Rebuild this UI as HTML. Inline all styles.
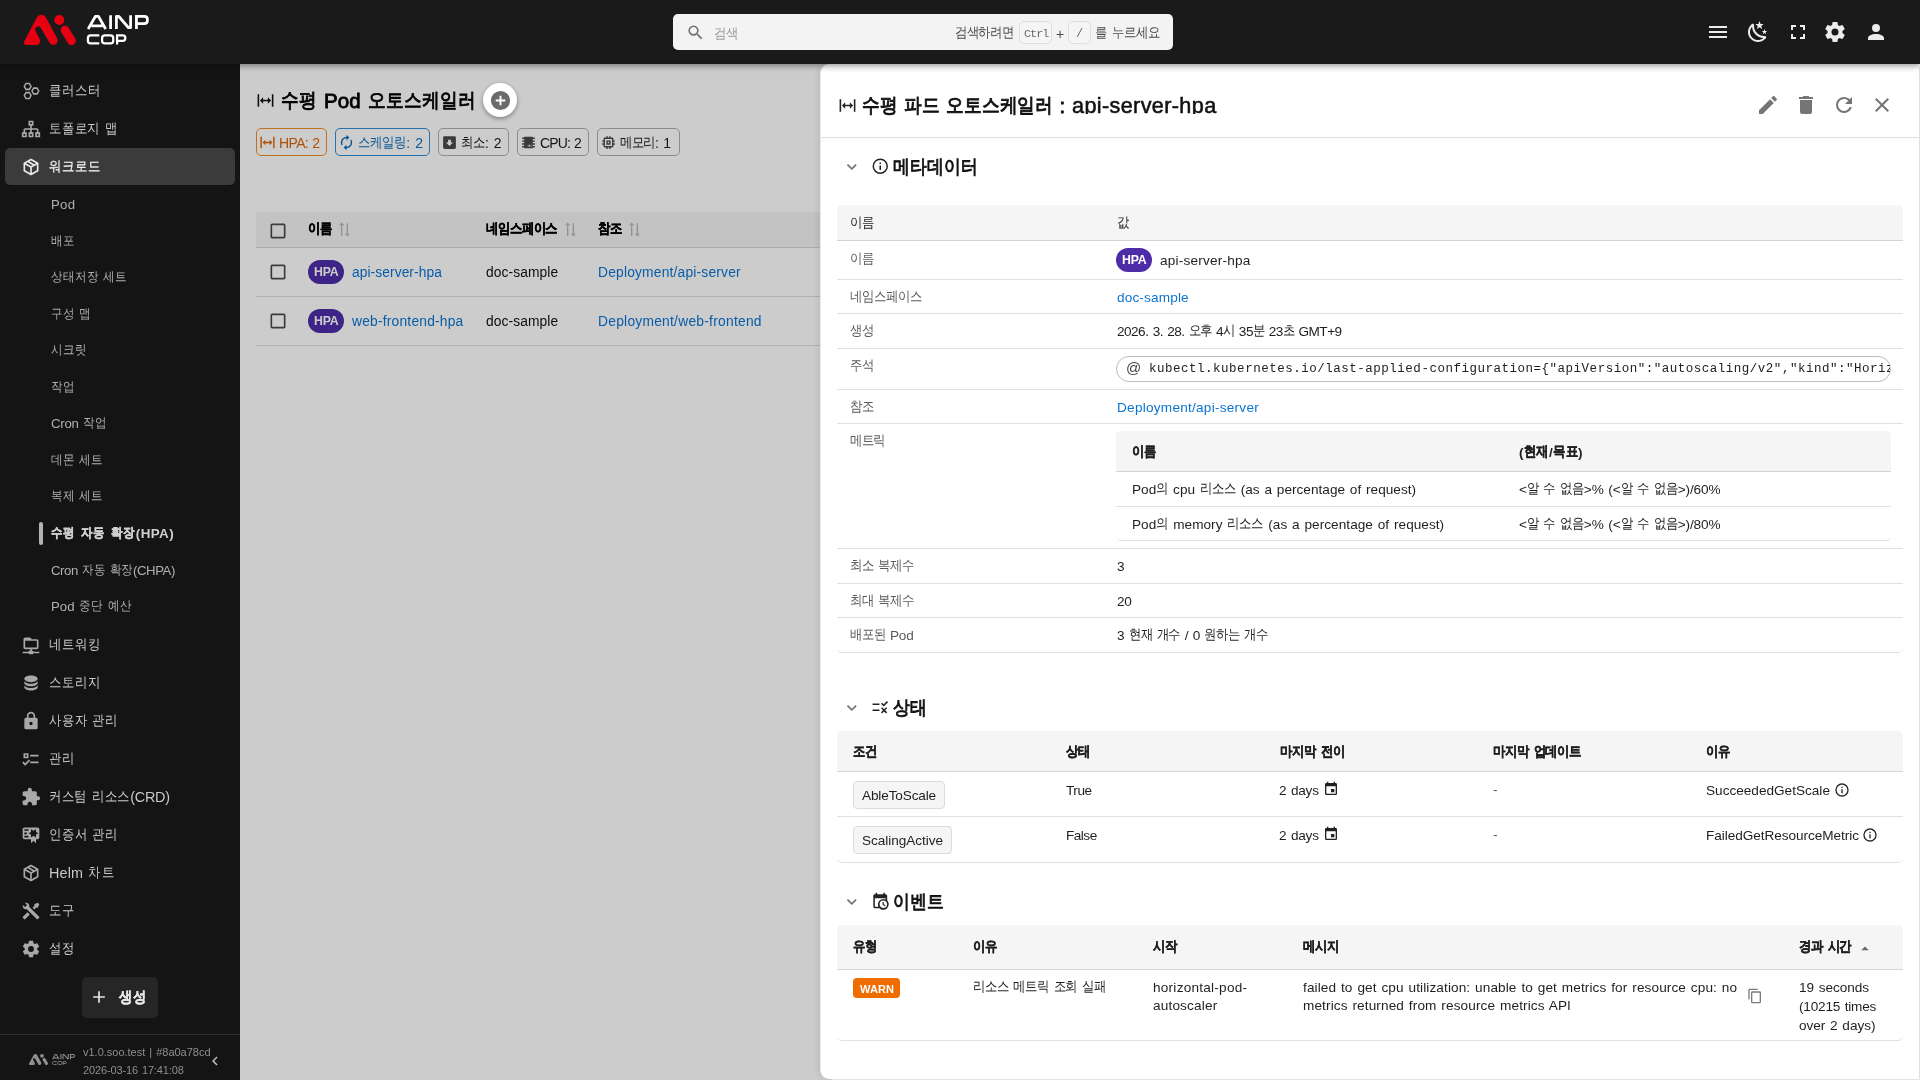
<!DOCTYPE html>
<html lang="ko"><head><meta charset="utf-8"><title>AINP COP</title><style>
*{box-sizing:border-box;margin:0;padding:0}
html,body{width:1920px;height:1080px;overflow:hidden;background:#fff;font-family:"Liberation Sans",sans-serif;}
body{position:relative}
.abs{position:absolute}
.mono{font-family:"Liberation Mono",monospace}
.z{letter-spacing:0}.t{position:absolute;white-space:nowrap;word-spacing:1px;will-change:transform}.k{font-size:.88em;display:inline-block;transform:translateY(-.105em) scaleY(1.13)}.t[style*="font-weight:700"] .k{-webkit-text-stroke:.3px}</style></head><body><div class="abs" style="left:0;top:0;width:1920px;height:1080px"><svg style="position:absolute;left:256px;top:91px;" width="19" height="19" viewBox="0 0 24 24"><path fill="#111" d="M9,11H15V8L19,12L15,16V13H9V16L5,12L9,8V11M2,20V4H4V20H2M20,20V4H22V20H20Z"/></svg><div class="t" style="left:281px;top:87.0px;color:#000;font-size:20.5px;font-weight:400;line-height:28px;-webkit-text-stroke:.8px #000;letter-spacing:0.09px;"><span class="k">수평</span> Pod <span class="k">오토스케일러</span></div><div style="position:absolute;left:256px;top:128px;width:71px;height:28px;border:1px solid #f28c28;border-radius:5px;background:transparent"></div><svg style="position:absolute;left:259px;top:133.5px;" width="17" height="17" viewBox="0 0 24 24"><path fill="#d9650a" d="M9,11H15V8L19,12L15,16V13H9V16L5,12L9,8V11M2,20V4H4V20H2M20,20V4H22V20H20Z"/></svg><div class="t" style="left:278.5px;top:133.0px;color:#d9650a;font-size:14px;font-weight:400;line-height:20px;letter-spacing:-0.64px;">HPA: 2</div><div style="position:absolute;left:335px;top:128px;width:95px;height:28px;border:1px solid #2f8fd8;border-radius:5px;background:transparent"></div><svg style="position:absolute;left:338px;top:133.5px;" width="17" height="17" viewBox="0 0 24 24"><path fill="#0b6fbd" d="M12,6V9L16,5L12,1V4A8,8 0 0,0 4,12C4,13.57 4.46,15.03 5.24,16.26L6.7,14.8C6.25,13.97 6,13 6,12A6,6 0 0,1 12,6M18.76,7.74L17.3,9.2C17.74,10.04 18,11 18,12A6,6 0 0,1 12,18V15L8,19L12,23V20A8,8 0 0,0 20,12C20,10.43 19.54,8.97 18.76,7.74Z"/></svg><div class="t" style="left:357.5px;top:133.0px;color:#0b6fbd;font-size:14px;font-weight:400;line-height:20px;letter-spacing:0.06px;"><span class="k">스케일링</span>: 2</div><div style="position:absolute;left:438px;top:128px;width:70.5px;height:28px;border:1px solid #b0b0b0;border-radius:5px;background:rgba(255,255,255,.08)"></div><svg style="position:absolute;left:441px;top:133.5px;" width="17" height="17" viewBox="0 0 24 24"><path fill="#4a4a4a" d="M5,3H19A2,2 0 0,1 21,5V19A2,2 0 0,1 19,21H5A2,2 0 0,1 3,19V5A2,2 0 0,1 5,3M12,17L17,12H14V8H10V12H7L12,17Z"/></svg><div class="t" style="left:460.5px;top:133.0px;color:#1c1c1c;font-size:14px;font-weight:400;line-height:20px;letter-spacing:-0.02px;"><span class="k">최소</span>: 2</div><div style="position:absolute;left:517px;top:128px;width:72px;height:28px;border:1px solid #b0b0b0;border-radius:5px;background:rgba(255,255,255,.08)"></div><svg style="position:absolute;left:520px;top:133.5px;" width="17" height="17" viewBox="0 0 24 24"><path fill="#4a4a4a" d="M6,4H18V5H21V7H18V9H21V11H18V13H21V15H18V17H21V19H18V20H6V19H3V17H6V15H3V13H6V11H3V9H6V7H3V5H6V4M11,15V18H12V15H11M13,15V18H14V15H13M15,15V18H16V15H15Z"/></svg><div class="t" style="left:540px;top:133.0px;color:#1c1c1c;font-size:14px;font-weight:400;line-height:20px;letter-spacing:-0.85px;">CPU: 2</div><div style="position:absolute;left:597px;top:128px;width:83px;height:28px;border:1px solid #b0b0b0;border-radius:5px;background:rgba(255,255,255,.08)"></div><svg style="position:absolute;left:600px;top:133.5px;" width="17" height="17" viewBox="0 0 24 24"><path fill="#4a4a4a" d="M17,17H7V7H17M21,11V9H19V7C19,5.89 18.1,5 17,5H15V3H13V5H11V3H9V5H7C5.89,5 5,5.89 5,7V9H3V11H5V13H3V15H5V17A2,2 0 0,0 7,19H9V21H11V19H13V21H15V19H17A2,2 0 0,0 19,17V15H21V13H19V11M13,13H11V11H13M15,9H9V15H15V9Z"/></svg><div class="t" style="left:620px;top:133.0px;color:#1c1c1c;font-size:14px;font-weight:400;line-height:20px;letter-spacing:-0.31px;"><span class="k">메모리</span>: 1</div><div style="position:absolute;left:256px;top:212px;width:1648px;height:36px;background:#f4f4f4;border-radius:4px 4px 0 0;border-bottom:1px solid #d6d6d6"></div><div style="position:absolute;left:256px;top:296px;width:1648px;height:1px;background:#dcdcdc"></div><div style="position:absolute;left:256px;top:345px;width:1648px;height:1px;background:#dcdcdc"></div><svg style="position:absolute;left:268px;top:221px;" width="20" height="20" viewBox="0 0 24 24"><path fill="#4a4a4a" d="M19 5v14H5V5h14m0-2H5c-1.1 0-2 .9-2 2v14c0 1.1.9 2 2 2h14c1.1 0 2-.9 2-2V5c0-1.1-.9-2-2-2z"/></svg><svg style="position:absolute;left:268px;top:262px;" width="20" height="20" viewBox="0 0 24 24"><path fill="#4a4a4a" d="M19 5v14H5V5h14m0-2H5c-1.1 0-2 .9-2 2v14c0 1.1.9 2 2 2h14c1.1 0 2-.9 2-2V5c0-1.1-.9-2-2-2z"/></svg><svg style="position:absolute;left:268px;top:311px;" width="20" height="20" viewBox="0 0 24 24"><path fill="#4a4a4a" d="M19 5v14H5V5h14m0-2H5c-1.1 0-2 .9-2 2v14c0 1.1.9 2 2 2h14c1.1 0 2-.9 2-2V5c0-1.1-.9-2-2-2z"/></svg><div class="t" style="left:308px;top:219.2px;color:#000;font-size:14px;font-weight:700;line-height:20px;letter-spacing:0.00px;"><span class="z">&#8203;</span><span class="k">이름</span></div><svg style="position:absolute;left:336px;top:221.0px" width="17" height="17" viewBox="0 0 24 24"><path fill="#b9b9b9" transform="rotate(-90 12 12)" d="M18 12l4-4-4-4v3H3v2h15zM6 12l-4 4 4 4v-3h15v-2H6z"/></svg><div class="t" style="left:486px;top:219.2px;color:#000;font-size:14px;font-weight:700;line-height:20px;letter-spacing:-0.12px;"><span class="z">&#8203;</span><span class="k">네임스페이스</span></div><svg style="position:absolute;left:562px;top:221.0px" width="17" height="17" viewBox="0 0 24 24"><path fill="#b9b9b9" transform="rotate(-90 12 12)" d="M18 12l4-4-4-4v3H3v2h15zM6 12l-4 4 4 4v-3h15v-2H6z"/></svg><div class="t" style="left:598px;top:219.2px;color:#000;font-size:14px;font-weight:700;line-height:20px;letter-spacing:0.25px;"><span class="z">&#8203;</span><span class="k">참조</span></div><svg style="position:absolute;left:626px;top:221.0px" width="17" height="17" viewBox="0 0 24 24"><path fill="#b9b9b9" transform="rotate(-90 12 12)" d="M18 12l4-4-4-4v3H3v2h15zM6 12l-4 4 4 4v-3h15v-2H6z"/></svg><div style="position:absolute;left:308px;top:260px;width:36px;height:24px;border-radius:12px;background:#4e2da8"></div><div class="t" style="left:314.4px;top:262.4px;color:#fff;font-size:12.3px;font-weight:700;line-height:20px;word-spacing:0;letter-spacing:-0.25px;">HPA</div><div class="t" style="left:352px;top:263.0px;color:#0b74d1;font-size:13.8px;font-weight:400;line-height:20px;letter-spacing:0.07px;">api-server-hpa</div><div class="t" style="left:486px;top:263.0px;color:#111;font-size:13.8px;font-weight:400;line-height:20px;letter-spacing:0.09px;">doc-sample</div><div class="t" style="left:598px;top:263.0px;color:#0b74d1;font-size:13.8px;font-weight:400;line-height:20px;letter-spacing:0.19px;">Deployment/api-server</div><div style="position:absolute;left:308px;top:309px;width:36px;height:24px;border-radius:12px;background:#4e2da8"></div><div class="t" style="left:314.4px;top:311.4px;color:#fff;font-size:12.3px;font-weight:700;line-height:20px;word-spacing:0;letter-spacing:-0.25px;">HPA</div><div class="t" style="left:352px;top:312.0px;color:#0b74d1;font-size:13.8px;font-weight:400;line-height:20px;letter-spacing:0.21px;">web-frontend-hpa</div><div class="t" style="left:486px;top:312.0px;color:#111;font-size:13.8px;font-weight:400;line-height:20px;letter-spacing:0.09px;">doc-sample</div><div class="t" style="left:598px;top:312.0px;color:#0b74d1;font-size:13.8px;font-weight:400;line-height:20px;letter-spacing:0.25px;">Deployment/web-frontend</div></div><div class="abs" style="left:240px;top:64px;width:1680px;height:1016px;background:rgba(0,0,0,.2)"></div><div style="position:absolute;left:483px;top:83px;width:34px;height:34px;border-radius:50%;background:#fff;box-shadow:0 2px 4px rgba(0,0,0,.28),0 1px 6px rgba(0,0,0,.14)"></div><svg style="position:absolute;left:488.5px;top:88.5px;" width="23" height="23" viewBox="0 0 24 24"><path fill="#6b6b6b" d="M17,13H13V17H11V13H7V11H11V7H13V11H17M12,2A10,10 0 0,0 2,12A10,10 0 0,0 12,22A10,10 0 0,0 22,12A10,10 0 0,0 12,2Z"/></svg><div class="abs" style="left:820px;top:64px;width:1100px;height:1015px;background:#fff;border-left:1px solid #e9e9e9;border-radius:9px 0 0 9px;box-shadow:-2px 0 8px rgba(0,0,0,.09)"></div><svg style="position:absolute;left:838px;top:96px;" width="19" height="19" viewBox="0 0 24 24"><path fill="#222" d="M9,11H15V8L19,12L15,16V13H9V16L5,12L9,8V11M2,20V4H4V20H2M20,20V4H22V20H20Z"/></svg><div class="t" style="left:862px;top:92.0px;color:#111;font-size:20.4px;font-weight:400;line-height:28px;-webkit-text-stroke:.85px #111;letter-spacing:-0.19px;"><span class="k">수평</span> <span class="k">파드</span> <span class="k">오토스케일러</span> :</div><div class="abs" style="left:1060px;top:84px;width:300px;height:29.8px;overflow:hidden"><div class="t" style="left:11.5px;top:8.0px;color:#111;font-size:21.6px;font-weight:400;line-height:28px;-webkit-text-stroke:.55px #111;letter-spacing:0.38px;">api-server-hpa</div></div><svg style="position:absolute;left:1756px;top:93px;" width="24" height="24" viewBox="0 0 24 24"><path fill="#757575" d="M20.71,7.04C21.1,6.65 21.1,6 20.71,5.63L18.37,3.29C18,2.9 17.35,2.9 16.96,3.29L15.12,5.12L18.87,8.87M3,17.25V21H6.75L17.81,9.93L14.06,6.18L3,17.25Z"/></svg><svg style="position:absolute;left:1794px;top:93px;" width="24" height="24" viewBox="0 0 24 24"><path fill="#757575" d="M19,4H15.5L14.5,3H9.5L8.5,4H5V6H19M6,19A2,2 0 0,0 8,21H16A2,2 0 0,0 18,19V7H6V19Z"/></svg><svg style="position:absolute;left:1832px;top:93px;" width="24" height="24" viewBox="0 0 24 24"><path fill="#757575" d="M17.65,6.35C16.2,4.9 14.21,4 12,4A8,8 0 0,0 4,12A8,8 0 0,0 12,20C15.73,20 18.84,17.45 19.73,14H17.65C16.83,16.33 14.61,18 12,18A6,6 0 0,1 6,12A6,6 0 0,1 12,6C13.66,6 15.14,6.69 16.22,7.78L13,11H20V4L17.65,6.35Z"/></svg><svg style="position:absolute;left:1870px;top:93px;" width="24" height="24" viewBox="0 0 24 24"><path fill="#757575" d="M19,6.41L17.59,5L12,10.59L6.41,5L5,6.41L10.59,12L5,17.59L6.41,19L12,13.41L17.59,19L19,17.59L13.41,12L19,6.41Z"/></svg><div style="position:absolute;left:821px;top:137px;width:1099px;height:1px;background:#e0e0e0;box-shadow:0 2px 4px rgba(0,0,0,.09)"></div><div style="position:absolute;left:1918.6px;top:67px;width:1.4px;height:1013px;background:#dedede"></div><div style="position:absolute;left:832px;top:1079px;width:1088px;height:1px;background:rgba(255,255,255,.5)"></div><svg style="position:absolute;left:841.7px;top:156.9px;" width="19.6" height="19.6" viewBox="0 0 24 24"><path fill="#707070" d="M7.41,8.58L12,13.17L16.59,8.58L18,10L12,16L6,10L7.41,8.58Z"/></svg><svg style="position:absolute;left:871px;top:157.25px;" width="18.5" height="18.5" viewBox="0 0 24 24"><path fill="#222" d="M11,9H13V7H11M12,20C7.59,20 4,16.41 4,12C4,7.59 7.59,4 12,4C16.41,4 20,7.59 20,12C20,16.41 16.41,20 12,20M12,2A10,10 0 0,0 2,12A10,10 0 0,0 12,22A10,10 0 0,0 22,12A10,10 0 0,0 12,2M11,17H13V11H11V17Z"/></svg><div class="t" style="left:893px;top:152.9px;color:#111;font-size:19.6px;font-weight:400;line-height:28px;-webkit-text-stroke:.8px #111;letter-spacing:0.00px;"><span class="z">&#8203;</span><span class="k">메타데이터</span></div><svg style="position:absolute;left:841.7px;top:697.9px;" width="19.6" height="19.6" viewBox="0 0 24 24"><path fill="#707070" d="M7.41,8.58L12,13.17L16.59,8.58L18,10L12,16L6,10L7.41,8.58Z"/></svg><svg style="position:absolute;left:871px;top:698.25px;" width="18.5" height="18.5" viewBox="0 0 24 24"><path fill="#222" d="M16.5 11L13 7.5L14.4 6.1L16.5 8.2L20.7 4L22.1 5.4L16.5 11M11 7H2V9H11V7M21 13.4L19.6 12L17 14.6L14.4 12L13 13.4L15.6 16L13 18.6L14.4 20L17 17.4L19.6 20L21 18.6L18.4 16L21 13.4M11 15H2V17H11V15Z"/></svg><div class="t" style="left:893px;top:693.9px;color:#111;font-size:19.6px;font-weight:400;line-height:28px;-webkit-text-stroke:.8px #111;letter-spacing:0.25px;"><span class="z">&#8203;</span><span class="k">상태</span></div><svg style="position:absolute;left:841.7px;top:891.9px;" width="19.6" height="19.6" viewBox="0 0 24 24"><path fill="#707070" d="M7.41,8.58L12,13.17L16.59,8.58L18,10L12,16L6,10L7.41,8.58Z"/></svg><svg style="position:absolute;left:871px;top:892.25px;" width="18.5" height="18.5" viewBox="0 0 24 24"><path fill="#222" d="M15,13H16.5V15.82L18.94,17.23L18.19,18.53L15,16.69V13M19,8H5V19H9.67C9.24,18.09 9,17.07 9,16A7,7 0 0,1 16,9C17.07,9 18.09,9.24 19,9.67V8M5,21C3.89,21 3,20.1 3,19V5C3,3.89 3.89,3 5,3H6V1H8V3H16V1H18V3H19A2,2 0 0,1 21,5V11.1C22.24,12.36 23,14.09 23,16A7,7 0 0,1 16,23C14.09,23 12.36,22.24 11.1,21H5M16,11.15A4.85,4.85 0 0,0 11.15,16C11.15,18.68 13.32,20.85 16,20.85A4.85,4.85 0 0,0 20.85,16C20.85,13.32 18.68,11.15 16,11.15Z"/></svg><div class="t" style="left:893px;top:887.9px;color:#111;font-size:19.6px;font-weight:400;line-height:28px;-webkit-text-stroke:.8px #111;letter-spacing:0.00px;"><span class="z">&#8203;</span><span class="k">이벤트</span></div><div style="position:absolute;left:837px;top:205px;width:1066px;height:36px;background:#f5f5f5;border-radius:5px 5px 0 0;border-bottom:1px solid #d4d4d4"></div><div class="t" style="left:849.5px;top:213.5px;color:#1f1f1f;font-size:13.6px;font-weight:400;line-height:20px;letter-spacing:-0.25px;"><span class="z">&#8203;</span><span class="k">이름</span></div><div class="t" style="left:1116.5px;top:213.5px;color:#1f1f1f;font-size:13.6px;font-weight:400;line-height:20px;"><span class="z">&#8203;</span><span class="k">값</span></div><div style="position:absolute;left:837px;top:279px;width:1066px;height:1px;background:#e0e0e0"></div><div style="position:absolute;left:837px;top:313px;width:1066px;height:1px;background:#e0e0e0"></div><div style="position:absolute;left:837px;top:348px;width:1066px;height:1px;background:#e0e0e0"></div><div style="position:absolute;left:837px;top:389px;width:1066px;height:1px;background:#e0e0e0"></div><div style="position:absolute;left:837px;top:423px;width:1066px;height:1px;background:#e0e0e0"></div><div style="position:absolute;left:837px;top:548px;width:1066px;height:1px;background:#e0e0e0"></div><div style="position:absolute;left:837px;top:583px;width:1066px;height:1px;background:#e0e0e0"></div><div style="position:absolute;left:837px;top:617px;width:1066px;height:1px;background:#e0e0e0"></div><div style="position:absolute;left:837px;top:640px;width:1066px;height:13px;border-bottom:1px solid #e0e0e0;border-radius:0 0 5px 5px"></div><div class="t" style="left:849.5px;top:249.5px;color:#5a5a5a;font-size:13.6px;font-weight:400;line-height:20px;letter-spacing:-0.25px;"><span class="z">&#8203;</span><span class="k">이름</span></div><div class="t" style="left:849.5px;top:287.5px;color:#5a5a5a;font-size:13.6px;font-weight:400;line-height:20px;letter-spacing:-0.08px;"><span class="z">&#8203;</span><span class="k">네임스페이스</span></div><div class="t" style="left:849.5px;top:321.5px;color:#5a5a5a;font-size:13.6px;font-weight:400;line-height:20px;letter-spacing:0.00px;"><span class="z">&#8203;</span><span class="k">생성</span></div><div class="t" style="left:849.5px;top:357.0px;color:#5a5a5a;font-size:13.6px;font-weight:400;line-height:20px;letter-spacing:0.00px;"><span class="z">&#8203;</span><span class="k">주석</span></div><div class="t" style="left:849.5px;top:397.5px;color:#5a5a5a;font-size:13.6px;font-weight:400;line-height:20px;letter-spacing:-0.25px;"><span class="z">&#8203;</span><span class="k">참조</span></div><div class="t" style="left:849.5px;top:431.5px;color:#5a5a5a;font-size:13.6px;font-weight:400;line-height:20px;letter-spacing:-0.33px;"><span class="z">&#8203;</span><span class="k">메트릭</span></div><div class="t" style="left:849.5px;top:556.5px;color:#5a5a5a;font-size:13.6px;font-weight:400;line-height:20px;letter-spacing:-0.21px;"><span class="z">&#8203;</span><span class="k">최소</span> <span class="k">복제수</span></div><div class="t" style="left:849.5px;top:591.5px;color:#5a5a5a;font-size:13.6px;font-weight:400;line-height:20px;letter-spacing:-0.21px;"><span class="z">&#8203;</span><span class="k">최대</span> <span class="k">복제수</span></div><div class="t" style="left:849.5px;top:626.0px;color:#5a5a5a;font-size:13.6px;font-weight:400;line-height:20px;letter-spacing:-0.21px;"><span class="k">배포된</span> Pod</div><div style="position:absolute;left:1116px;top:248px;width:36px;height:24px;border-radius:12px;background:#4e2ca8"></div><div class="t" style="left:1122.4px;top:250.39999999999998px;color:#fff;font-size:12.3px;font-weight:700;line-height:20px;word-spacing:0;letter-spacing:-0.25px;">HPA</div><div class="t" style="left:1160px;top:251.0px;color:#1f1f1f;font-size:13.6px;font-weight:400;line-height:20px;letter-spacing:0.20px;">api-server-hpa</div><div class="t" style="left:1116.5px;top:288.0px;color:#0b74d1;font-size:13.6px;font-weight:400;line-height:20px;letter-spacing:0.15px;">doc-sample</div><div class="t" style="left:1116.5px;top:322.0px;color:#1f1f1f;font-size:13.6px;font-weight:400;line-height:20px;letter-spacing:-0.52px;">2026. 3. 28. <span class="k">오후</span> 4<span class="k">시</span> 35<span class="k">분</span> 23<span class="k">초</span> GMT+9</div><div style="position:absolute;left:1116px;top:356px;width:775px;height:26px;border:1px solid #bdbdbd;border-radius:13px"></div><div class="t" style="left:1125.5px;top:358.0px;color:#444;font-size:15px;font-weight:400;line-height:20px;">@</div><div class="t mono" style="left:1149px;top:359px;width:741px;overflow:hidden;font-size:12.5px;line-height:20px;color:#222;letter-spacing:0.51px;word-spacing:0">kubectl.kubernetes.io/last-applied-configuration={"apiVersion":"autoscaling/v2","kind":"HorizontalPodAutoscaler"</div><div class="t" style="left:1116.5px;top:398.0px;color:#0b74d1;font-size:13.6px;font-weight:400;line-height:20px;letter-spacing:0.25px;">Deployment/api-server</div><div style="position:absolute;left:1116px;top:431px;width:775px;height:41px;background:#f5f5f5;border-radius:5px 5px 0 0;border-bottom:1px solid #d4d4d4"></div><div class="t" style="left:1132px;top:442.5px;color:#1f1f1f;font-size:13.6px;font-weight:700;line-height:20px;letter-spacing:0.00px;"><span class="z">&#8203;</span><span class="k">이름</span></div><div class="t" style="left:1519px;top:442.5px;color:#1f1f1f;font-size:13.6px;font-weight:700;line-height:20px;letter-spacing:0.45px;">(<span class="k">현재</span>/<span class="k">목표</span>)</div><div style="position:absolute;left:1116px;top:506px;width:775px;height:1px;background:#e0e0e0"></div><div style="position:absolute;left:1116px;top:530px;width:775px;height:11px;border-bottom:1px solid #e0e0e0;border-radius:0 0 5px 5px"></div><div class="t" style="left:1132px;top:480.0px;color:#1f1f1f;font-size:13.6px;font-weight:400;line-height:20px;letter-spacing:0.02px;">Pod<span class="k">의</span> cpu <span class="k">리소스</span> (as a percentage of request)</div><div class="t" style="left:1132px;top:515.0px;color:#1f1f1f;font-size:13.6px;font-weight:400;line-height:20px;letter-spacing:0.04px;">Pod<span class="k">의</span> memory <span class="k">리소스</span> (as a percentage of request)</div><div class="t" style="left:1519px;top:480.0px;color:#1f1f1f;font-size:13.6px;font-weight:400;line-height:20px;letter-spacing:-0.10px;">&lt;<span class="k">알</span> <span class="k">수</span> <span class="k">없음</span>&gt;% (&lt;<span class="k">알</span> <span class="k">수</span> <span class="k">없음</span>&gt;)/60%</div><div class="t" style="left:1519px;top:515.0px;color:#1f1f1f;font-size:13.6px;font-weight:400;line-height:20px;letter-spacing:-0.10px;">&lt;<span class="k">알</span> <span class="k">수</span> <span class="k">없음</span>&gt;% (&lt;<span class="k">알</span> <span class="k">수</span> <span class="k">없음</span>&gt;)/80%</div><div class="t" style="left:1116.5px;top:557.0px;color:#1f1f1f;font-size:13.6px;font-weight:400;line-height:20px;">3</div><div class="t" style="left:1116.5px;top:592.0px;color:#1f1f1f;font-size:13.6px;font-weight:400;line-height:20px;letter-spacing:-0.31px;">20</div><div class="t" style="left:1116.5px;top:626.0px;color:#1f1f1f;font-size:13.6px;font-weight:400;line-height:20px;letter-spacing:-0.28px;">3 <span class="k">현재</span> <span class="k">개수</span> / 0 <span class="k">원하는</span> <span class="k">개수</span></div><div style="position:absolute;left:837px;top:731px;width:1066px;height:41px;background:#f5f5f5;border-radius:5px 5px 0 0;border-bottom:1px solid #d4d4d4"></div><div class="t" style="left:853px;top:742.5px;color:#1f1f1f;font-size:13.6px;font-weight:700;line-height:20px;letter-spacing:0.25px;"><span class="z">&#8203;</span><span class="k">조건</span></div><div class="t" style="left:1066.3px;top:742.5px;color:#1f1f1f;font-size:13.6px;font-weight:700;line-height:20px;letter-spacing:-0.15px;"><span class="z">&#8203;</span><span class="k">상태</span></div><div class="t" style="left:1279.5px;top:742.5px;color:#1f1f1f;font-size:13.6px;font-weight:700;line-height:20px;letter-spacing:-0.05px;"><span class="z">&#8203;</span><span class="k">마지막</span> <span class="k">전이</span></div><div class="t" style="left:1492.8px;top:742.5px;color:#1f1f1f;font-size:13.6px;font-weight:700;line-height:20px;letter-spacing:-0.07px;"><span class="z">&#8203;</span><span class="k">마지막</span> <span class="k">업데이트</span></div><div class="t" style="left:1706px;top:742.5px;color:#1f1f1f;font-size:13.6px;font-weight:700;line-height:20px;letter-spacing:0.25px;"><span class="z">&#8203;</span><span class="k">이유</span></div><div style="position:absolute;left:837px;top:816px;width:1066px;height:1px;background:#e0e0e0"></div><div style="position:absolute;left:837px;top:850px;width:1066px;height:13px;border-bottom:1px solid #e0e0e0;border-radius:0 0 5px 5px"></div><div style="position:absolute;left:853px;top:780.5px;width:92px;height:28.5px;border:1px solid #dcdcdc;border-radius:4px;background:#f5f5f5"></div><div class="t" style="left:862px;top:786.25px;color:#1f1f1f;font-size:13.6px;font-weight:400;line-height:20px;letter-spacing:-0.14px;">AbleToScale</div><div style="position:absolute;left:853px;top:825.5px;width:99px;height:28.5px;border:1px solid #dcdcdc;border-radius:4px;background:#f5f5f5"></div><div class="t" style="left:862px;top:831.25px;color:#1f1f1f;font-size:13.6px;font-weight:400;line-height:20px;letter-spacing:-0.05px;">ScalingActive</div><div class="t" style="left:1066.3px;top:780.5px;color:#1f1f1f;font-size:13.6px;font-weight:400;line-height:20px;letter-spacing:-0.44px;">True</div><div class="t" style="left:1278.8px;top:781.2px;color:#1f1f1f;font-size:13.6px;font-weight:400;line-height:20px;letter-spacing:-0.21px;">2 days</div><svg style="position:absolute;left:1323px;top:781.0px;" width="16" height="16" viewBox="0 0 24 24"><path fill="#222" d="M19,19H5V8H19M16,1V3H8V1H6V3H5C3.89,3 3,3.89 3,5V19A2,2 0 0,0 5,21H19A2,2 0 0,0 21,19V5C21,3.89 20.1,3 19,3H18V1M17,12H12V17H17V12Z"/></svg><div class="t" style="left:1492.8px;top:779.5px;color:#555;font-size:13.6px;font-weight:400;line-height:20px;">-</div><div class="t" style="left:1706px;top:781.2px;color:#1f1f1f;font-size:13.6px;font-weight:400;line-height:20px;letter-spacing:0.00px;">SucceededGetScale</div><svg style="position:absolute;left:1833.5px;top:781.5px;" width="16" height="16" viewBox="0 0 24 24"><path fill="#222" d="M11,9H13V7H11M12,20C7.59,20 4,16.41 4,12C4,7.59 7.59,4 12,4C16.41,4 20,7.59 20,12C20,16.41 16.41,20 12,20M12,2A10,10 0 0,0 2,12A10,10 0 0,0 12,22A10,10 0 0,0 22,12A10,10 0 0,0 12,2M11,17H13V11H11V17Z"/></svg><div class="t" style="left:1066.3px;top:825.5px;color:#1f1f1f;font-size:13.6px;font-weight:400;line-height:20px;letter-spacing:-0.51px;">False</div><div class="t" style="left:1278.8px;top:826.2px;color:#1f1f1f;font-size:13.6px;font-weight:400;line-height:20px;letter-spacing:-0.21px;">2 days</div><svg style="position:absolute;left:1323px;top:826.0px;" width="16" height="16" viewBox="0 0 24 24"><path fill="#222" d="M19,19H5V8H19M16,1V3H8V1H6V3H5C3.89,3 3,3.89 3,5V19A2,2 0 0,0 5,21H19A2,2 0 0,0 21,19V5C21,3.89 20.1,3 19,3H18V1M17,12H12V17H17V12Z"/></svg><div class="t" style="left:1492.8px;top:824.5px;color:#555;font-size:13.6px;font-weight:400;line-height:20px;">-</div><div class="t" style="left:1706px;top:826.2px;color:#1f1f1f;font-size:13.6px;font-weight:400;line-height:20px;letter-spacing:-0.05px;">FailedGetResourceMetric</div><svg style="position:absolute;left:1862px;top:826.5px;" width="16" height="16" viewBox="0 0 24 24"><path fill="#222" d="M11,9H13V7H11M12,20C7.59,20 4,16.41 4,12C4,7.59 7.59,4 12,4C16.41,4 20,7.59 20,12C20,16.41 16.41,20 12,20M12,2A10,10 0 0,0 2,12A10,10 0 0,0 12,22A10,10 0 0,0 22,12A10,10 0 0,0 12,2M11,17H13V11H11V17Z"/></svg><div style="position:absolute;left:837px;top:925px;width:1066px;height:45px;background:#f5f5f5;border-radius:5px 5px 0 0;border-bottom:1px solid #d4d4d4"></div><div class="t" style="left:853px;top:937.5px;color:#1f1f1f;font-size:13.6px;font-weight:700;line-height:20px;letter-spacing:0.10px;"><span class="z">&#8203;</span><span class="k">유형</span></div><div class="t" style="left:973.3px;top:937.5px;color:#1f1f1f;font-size:13.6px;font-weight:700;line-height:20px;letter-spacing:0.15px;"><span class="z">&#8203;</span><span class="k">이유</span></div><div class="t" style="left:1153.2px;top:937.5px;color:#1f1f1f;font-size:13.6px;font-weight:700;line-height:20px;letter-spacing:0.40px;"><span class="z">&#8203;</span><span class="k">시작</span></div><div class="t" style="left:1303.3px;top:937.5px;color:#1f1f1f;font-size:13.6px;font-weight:700;line-height:20px;letter-spacing:0.07px;"><span class="z">&#8203;</span><span class="k">메시지</span></div><div class="t" style="left:1799.2px;top:937.5px;color:#1f1f1f;font-size:13.6px;font-weight:700;line-height:20px;letter-spacing:-0.10px;"><span class="z">&#8203;</span><span class="k">경과</span> <span class="k">시간</span></div><svg style="position:absolute;left:1856px;top:939px;" width="18" height="18" viewBox="0 0 24 24"><path fill="#6a6a6a" d="M7,15L12,10L17,15H7Z"/></svg><div style="position:absolute;left:837px;top:1028px;width:1066px;height:13px;border-bottom:1px solid #e0e0e0;border-radius:0 0 5px 5px"></div><div style="position:absolute;left:853px;top:978px;width:47px;height:20px;border-radius:4px;background:#ef6c00"></div><div class="t" style="left:860px;top:978.6px;color:#fff;font-size:11px;font-weight:700;line-height:20px;letter-spacing:0.10px;">WARN</div><div class="t" style="left:973.3px;top:978.0px;color:#1f1f1f;font-size:13.6px;font-weight:400;line-height:20px;letter-spacing:-0.13px;"><span class="z">&#8203;</span><span class="k">리소스</span> <span class="k">메트릭</span> <span class="k">조회</span> <span class="k">실패</span></div><div class="t" style="left:1153.2px;top:978.0px;color:#1f1f1f;font-size:13.6px;font-weight:400;line-height:20px;letter-spacing:0.24px;">horizontal-pod-</div><div class="t" style="left:1153.2px;top:996.3px;color:#1f1f1f;font-size:13.6px;font-weight:400;line-height:20px;letter-spacing:0.16px;">autoscaler</div><div class="t" style="left:1303.3px;top:978.0px;color:#1f1f1f;font-size:13.6px;font-weight:400;line-height:20px;letter-spacing:0.10px;">failed to get cpu utilization: unable to get metrics for resource cpu: no</div><div class="t" style="left:1303.3px;top:996.3px;color:#1f1f1f;font-size:13.6px;font-weight:400;line-height:20px;letter-spacing:0.11px;">metrics returned from resource metrics API</div><svg style="position:absolute;left:1747px;top:988px;" width="16" height="16" viewBox="0 0 24 24"><path fill="#7a7a7a" d="M19,21H8V7H19M19,5H8A2,2 0 0,0 6,7V21A2,2 0 0,0 8,23H19A2,2 0 0,0 21,21V7A2,2 0 0,0 19,5M16,1H4A2,2 0 0,0 2,3V17H4V3H16V1Z"/></svg><div class="t" style="left:1799.2px;top:978.3px;color:#1f1f1f;font-size:13.6px;font-weight:400;line-height:20px;letter-spacing:-0.04px;">19 seconds</div><div class="t" style="left:1799.2px;top:996.6px;color:#1f1f1f;font-size:13.6px;font-weight:400;line-height:20px;letter-spacing:-0.20px;">(10215 times</div><div class="t" style="left:1799.2px;top:1015.5px;color:#1f1f1f;font-size:13.6px;font-weight:400;line-height:20px;letter-spacing:-0.03px;">over 2 days)</div><div style="position:absolute;left:0px;top:64px;width:240px;height:1016px;background:#141414"></div><div style="position:absolute;left:5px;top:148px;width:230px;height:37px;background:#3b3b3b;border-radius:5px"></div><svg style="position:absolute;left:21px;top:80.5px;" width="20" height="20" viewBox="0 0 24 24"><path fill="#a8a8a8" d="M10.25 2C10.44 2 10.61 2.11 10.69 2.26L12.91 6.22L13 6.5L12.91 6.78L10.69 10.74C10.61 10.89 10.44 11 10.25 11H5.75C5.56 11 5.39 10.89 5.31 10.74L3.09 6.78L3 6.5L3.09 6.22L5.31 2.26C5.39 2.11 5.56 2 5.75 2H10.25M10.25 13C10.44 13 10.61 13.11 10.69 13.26L12.91 17.22L13 17.5L12.91 17.78L10.69 21.74C10.61 21.89 10.44 22 10.25 22H5.75C5.56 22 5.39 21.89 5.31 21.74L3.09 17.78L3 17.5L3.09 17.22L5.31 13.26C5.39 13.11 5.56 13 5.75 13H10.25M19.5 7.5C19.69 7.5 19.86 7.61 19.94 7.76L22.16 11.72L22.25 12L22.16 12.28L19.94 16.24C19.86 16.39 19.69 16.5 19.5 16.5H15C14.81 16.5 14.64 16.39 14.56 16.24L12.34 12.28L12.25 12L12.34 11.72L14.56 7.76C14.64 7.61 14.81 7.5 15 7.5H19.5M6.33 4L4.94 6.5L6.33 9H9.67L11.06 6.5L9.67 4H6.33M6.33 15L4.94 17.5L6.33 20H9.67L11.06 17.5L9.67 15H6.33M15.58 9.5L14.19 12L15.58 14.5H18.92L20.31 12L18.92 9.5H15.58Z"/></svg><div class="t" style="left:49px;top:81.0px;color:#c9c9c9;font-size:14.4px;font-weight:400;line-height:20px;letter-spacing:0.00px;"><span class="z">&#8203;</span><span class="k">클러스터</span></div><svg style="position:absolute;left:21px;top:118.5px;" width="20" height="20" viewBox="0 0 24 24"><path fill="#a8a8a8" d="M9 2V8H11V11H5C3.89 11 3 11.89 3 13V16H1V22H7V16H5V13H11V16H9V22H15V16H13V13H19V16H17V22H23V16H21V13C21 11.89 20.11 11 19 11H13V8H15V2H9M11 4H13V6H11V4M3 18H5V20H3V18M11 18H13V20H11V18M19 18H21V20H19V18Z"/></svg><div class="t" style="left:49px;top:119.0px;color:#c9c9c9;font-size:14.4px;font-weight:400;line-height:20px;letter-spacing:-0.22px;"><span class="z">&#8203;</span><span class="k">토폴로지</span> <span class="k">맵</span></div><svg style="position:absolute;left:21px;top:156.5px;" width="20" height="20" viewBox="0 0 24 24"><path fill="#e8e8e8" d="M21,16.5C21,16.88 20.79,17.21 20.47,17.38L12.57,21.82C12.41,21.94 12.21,22 12,22C11.79,22 11.59,21.94 11.43,21.82L3.53,17.38C3.21,17.21 3,16.88 3,16.5V7.5C3,7.12 3.21,6.79 3.53,6.62L11.43,2.18C11.59,2.06 11.79,2 12,2C12.21,2 12.41,2.06 12.57,2.18L20.47,6.62C20.79,6.79 21,7.12 21,7.5V16.5M12,4.15L10.11,5.22L16,8.61L17.96,7.5L12,4.15M6.04,7.5L12,10.85L13.96,9.75L8.08,6.35L6.04,7.5M5,15.91L11,19.29V12.58L5,9.21V15.91M19,15.91V9.21L13,12.58V19.29L19,15.91Z"/></svg><div class="t" style="left:49px;top:157.0px;color:#f2f2f2;font-size:14.4px;font-weight:400;line-height:20px;-webkit-text-stroke:.2px #f2f2f2;letter-spacing:-0.07px;"><span class="z">&#8203;</span><span class="k">워크로드</span></div><svg style="position:absolute;left:21px;top:634.5px;" width="20" height="20" viewBox="0 0 24 24"><path fill="#a8a8a8" d="M15 20C15 19.45 14.55 19 14 19H13V17H19C20.11 17 21 16.11 21 15V7C21 5.9 20.11 5 19 5H13L11 3H5C3.9 3 3 3.9 3 5V15C3 16.11 3.9 17 5 17H11V19H10C9.45 19 9 19.45 9 20H2V22H9C9 22.55 9.45 23 10 23H14C14.55 23 15 22.55 15 22H22V20H15M5 15V7H19V15H5Z"/></svg><div class="t" style="left:49px;top:635.0px;color:#c9c9c9;font-size:14.4px;font-weight:400;line-height:20px;letter-spacing:-0.07px;"><span class="z">&#8203;</span><span class="k">네트워킹</span></div><svg style="position:absolute;left:21px;top:672.5px;" width="20" height="20" viewBox="0 0 24 24"><path fill="#a8a8a8" d="M12,3C7.58,3 4,4.79 4,7C4,9.21 7.58,11 12,11C16.42,11 20,9.21 20,7C20,4.79 16.42,3 12,3M4,9V12C4,14.21 7.58,16 12,16C16.42,16 20,14.21 20,12V9C20,11.21 16.42,13 12,13C7.58,13 4,11.21 4,9M4,14V17C4,19.21 7.58,21 12,21C16.42,21 20,19.21 20,17V14C20,16.21 16.42,18 12,18C7.58,18 4,16.21 4,14Z"/></svg><div class="t" style="left:49px;top:673.0px;color:#c9c9c9;font-size:14.4px;font-weight:400;line-height:20px;letter-spacing:-0.07px;"><span class="z">&#8203;</span><span class="k">스토리지</span></div><svg style="position:absolute;left:21px;top:710.5px;" width="20" height="20" viewBox="0 0 24 24"><path fill="#a8a8a8" d="M12,17A2,2 0 0,0 14,15C14,13.89 13.1,13 12,13A2,2 0 0,0 10,15A2,2 0 0,0 12,17M18,8A2,2 0 0,1 20,10V20A2,2 0 0,1 18,22H6A2,2 0 0,1 4,20V10C4,8.89 4.9,8 6,8H7V6A5,5 0 0,1 12,1A5,5 0 0,1 17,6V8H18M12,3A3,3 0 0,0 9,6V8H15V6A3,3 0 0,0 12,3Z"/></svg><div class="t" style="left:49px;top:711.0px;color:#c9c9c9;font-size:14.4px;font-weight:400;line-height:20px;letter-spacing:-0.20px;"><span class="z">&#8203;</span><span class="k">사용자</span> <span class="k">관리</span></div><svg style="position:absolute;left:21px;top:748.5px;" width="20" height="20" viewBox="0 0 24 24"><path fill="#a8a8a8" d="M3,5H9V11H3V5M5,7V9H7V7H5M11,7H21V9H11V7M11,15H21V17H11V15M5,20L1.5,16.5L2.91,15.09L5,17.17L9.59,12.59L11,14L5,20Z"/></svg><div class="t" style="left:49px;top:749.0px;color:#c9c9c9;font-size:14.4px;font-weight:400;line-height:20px;letter-spacing:0.10px;"><span class="z">&#8203;</span><span class="k">관리</span></div><svg style="position:absolute;left:21px;top:786.5px;" width="20" height="20" viewBox="0 0 24 24"><path fill="#a8a8a8" d="M20.5,11H19V7C19,5.89 18.1,5 17,5H13V3.5A2.5,2.5 0 0,0 10.5,1A2.5,2.5 0 0,0 8,3.5V5H4A2,2 0 0,0 2,7V10.8H3.5C5,10.8 6.2,12 6.2,13.5C6.2,15 5,16.2 3.5,16.2H2V20A2,2 0 0,0 4,22H7.8V20.5C7.8,19 9,17.8 10.5,17.8C12,17.8 13.2,19 13.2,20.5V22H17A2,2 0 0,0 19,20V16H20.5A2.5,2.5 0 0,0 23,13.5A2.5,2.5 0 0,0 20.5,11Z"/></svg><div class="t" style="left:49px;top:787.0px;color:#c9c9c9;font-size:14.4px;font-weight:400;line-height:20px;letter-spacing:-0.26px;"><span class="k">커스텀</span> <span class="k">리소스</span>(CRD)</div><svg style="position:absolute;left:21px;top:824.5px;" width="20" height="20" viewBox="0 0 24 24"><path fill="#a8a8a8" d="M4,3C2.89,3 2,3.89 2,5V15A2,2 0 0,0 4,17H12V22L15,19L18,22V17H20A2,2 0 0,0 22,15V8L22,6V5A2,2 0 0,0 20,3H16V3H4M12,5L15,7L18,5V8.5L21,10L18,11.5V15L15,13L12,15V11.5L9,10L12,8.5V5M4,5H9V7H4V5M4,9H7V11H4V9M4,13H9V15H4V13Z"/></svg><div class="t" style="left:49px;top:825.0px;color:#c9c9c9;font-size:14.4px;font-weight:400;line-height:20px;letter-spacing:-0.20px;"><span class="z">&#8203;</span><span class="k">인증서</span> <span class="k">관리</span></div><svg style="position:absolute;left:21px;top:862.5px;" width="20" height="20" viewBox="0 0 24 24"><path fill="#a8a8a8" d="M21,16.5C21,16.88 20.79,17.21 20.47,17.38L12.57,21.82C12.41,21.94 12.21,22 12,22C11.79,22 11.59,21.94 11.43,21.82L3.53,17.38C3.21,17.21 3,16.88 3,16.5V7.5C3,7.12 3.21,6.79 3.53,6.62L11.43,2.18C11.59,2.06 11.79,2 12,2C12.21,2 12.41,2.06 12.57,2.18L20.47,6.62C20.79,6.79 21,7.12 21,7.5V16.5M12,4.15L10.11,5.22L16,8.61L17.96,7.5L12,4.15M6.04,7.5L12,10.85L13.96,9.75L8.08,6.35L6.04,7.5M5,15.91L11,19.29V12.58L5,9.21V15.91M19,15.91V9.21L13,12.58V19.29L19,15.91Z"/></svg><div class="t" style="left:49px;top:863.0px;color:#c9c9c9;font-size:14.4px;font-weight:400;line-height:20px;letter-spacing:0.17px;">Helm <span class="k">차트</span></div><svg style="position:absolute;left:21px;top:900.5px;" width="20" height="20" viewBox="0 0 24 24"><path fill="#a8a8a8" d="M21.71 20.29L20.29 21.71A1 1 0 0 1 18.88 21.71L7 9.85A3.81 3.81 0 0 1 6 10A4 4 0 0 1 2.22 4.7L4.76 7.24L5.29 6.71L6.71 5.29L7.24 4.76L4.7 2.22A4 4 0 0 1 10 6A3.81 3.81 0 0 1 9.85 7L21.71 18.88A1 1 0 0 1 21.71 20.29M2.29 18.88A1 1 0 0 0 2.29 20.29L3.71 21.71A1 1 0 0 0 5.12 21.71L10.59 16.25L7.76 13.42M20 2L16 4V6L13.83 8.17L15.83 10.17L18 8H20L22 4Z"/></svg><div class="t" style="left:49px;top:901.0px;color:#c9c9c9;font-size:14.4px;font-weight:400;line-height:20px;letter-spacing:0.10px;"><span class="z">&#8203;</span><span class="k">도구</span></div><svg style="position:absolute;left:21px;top:938.5px;" width="20" height="20" viewBox="0 0 24 24"><path fill="#a8a8a8" d="M12,15.5A3.5,3.5 0 0,1 8.5,12A3.5,3.5 0 0,1 12,8.5A3.5,3.5 0 0,1 15.5,12A3.5,3.5 0 0,1 12,15.5M19.43,12.97C19.47,12.65 19.5,12.33 19.5,12C19.5,11.67 19.47,11.34 19.43,11L21.54,9.37C21.73,9.22 21.78,8.95 21.66,8.73L19.66,5.27C19.54,5.05 19.27,4.96 19.05,5.05L16.56,6.05C16.04,5.66 15.5,5.32 14.87,5.07L14.5,2.42C14.46,2.18 14.25,2 14,2H10C9.75,2 9.54,2.18 9.5,2.42L9.13,5.07C8.5,5.32 7.96,5.66 7.44,6.05L4.95,5.05C4.73,4.96 4.46,5.05 4.34,5.27L2.34,8.73C2.21,8.95 2.27,9.22 2.46,9.37L4.57,11C4.53,11.34 4.5,11.67 4.5,12C4.5,12.33 4.53,12.65 4.57,12.97L2.46,14.63C2.27,14.78 2.21,15.05 2.34,15.27L4.34,18.73C4.46,18.95 4.73,19.03 4.95,18.95L7.44,17.94C7.96,18.34 8.5,18.68 9.13,18.93L9.5,21.58C9.54,21.82 9.75,22 10,22H14C14.25,22 14.46,21.82 14.5,21.58L14.87,18.93C15.5,18.67 16.04,18.34 16.56,17.94L19.05,18.95C19.27,19.03 19.54,18.95 19.66,18.73L21.66,15.27C21.78,15.05 21.73,14.78 21.54,14.63L19.43,12.97Z"/></svg><div class="t" style="left:49px;top:939.0px;color:#c9c9c9;font-size:14.4px;font-weight:400;line-height:20px;letter-spacing:0.10px;"><span class="z">&#8203;</span><span class="k">설정</span></div><div class="t" style="left:51px;top:195.0px;color:#b0b0b0;font-size:13.2px;font-weight:400;line-height:20px;letter-spacing:0.28px;">Pod</div><div class="t" style="left:51px;top:231.9px;color:#b0b0b0;font-size:13.2px;font-weight:400;line-height:20px;letter-spacing:0.00px;"><span class="z">&#8203;</span><span class="k">배포</span></div><div class="t" style="left:51px;top:267.9px;color:#b0b0b0;font-size:13.2px;font-weight:400;line-height:20px;letter-spacing:-0.10px;"><span class="z">&#8203;</span><span class="k">상태저장</span> <span class="k">세트</span></div><div class="t" style="left:51px;top:304.9px;color:#b0b0b0;font-size:13.2px;font-weight:400;line-height:20px;letter-spacing:-0.24px;"><span class="z">&#8203;</span><span class="k">구성</span> <span class="k">맵</span></div><div class="t" style="left:51px;top:340.9px;color:#b0b0b0;font-size:13.2px;font-weight:400;line-height:20px;letter-spacing:0.13px;"><span class="z">&#8203;</span><span class="k">시크릿</span></div><div class="t" style="left:51px;top:377.9px;color:#b0b0b0;font-size:13.2px;font-weight:400;line-height:20px;letter-spacing:0.00px;"><span class="z">&#8203;</span><span class="k">작업</span></div><div class="t" style="left:51px;top:414.0px;color:#b0b0b0;font-size:13.2px;font-weight:400;line-height:20px;letter-spacing:-0.21px;">Cron <span class="k">작업</span></div><div class="t" style="left:51px;top:450.9px;color:#b0b0b0;font-size:13.2px;font-weight:400;line-height:20px;letter-spacing:-0.13px;"><span class="z">&#8203;</span><span class="k">데몬</span> <span class="k">세트</span></div><div class="t" style="left:51px;top:486.9px;color:#b0b0b0;font-size:13.2px;font-weight:400;line-height:20px;letter-spacing:-0.13px;"><span class="z">&#8203;</span><span class="k">복제</span> <span class="k">세트</span></div><div style="position:absolute;left:39px;top:522px;width:4px;height:23px;background:#b3b3b3;border-radius:2px"></div><div class="t" style="left:51px;top:524.0px;color:#cfcfcf;font-size:13.4px;font-weight:700;line-height:20px;letter-spacing:0.41px;"><span class="k">수평</span> <span class="k">자동</span> <span class="k">확장</span>(HPA)</div><div class="t" style="left:51px;top:561.0px;color:#b0b0b0;font-size:13.2px;font-weight:400;line-height:20px;letter-spacing:-0.40px;">Cron <span class="k">자동</span> <span class="k">확장</span>(CHPA)</div><div class="t" style="left:51px;top:597.0px;color:#b0b0b0;font-size:13.2px;font-weight:400;line-height:20px;letter-spacing:0.02px;">Pod <span class="k">중단</span> <span class="k">예산</span></div><div style="position:absolute;left:82px;top:976.5px;width:76px;height:41px;background:#262626;border-radius:5px"></div><svg style="position:absolute;left:89px;top:987px;" width="20" height="20" viewBox="0 0 24 24"><path fill="#e6e6e6" d="M19,13H13V19H11V13H5V11H11V5H13V11H19V13Z"/></svg><div class="t" style="left:119px;top:988.0px;color:#e6e6e6;font-size:15.5px;font-weight:700;line-height:20px;letter-spacing:0.35px;"><span class="z">&#8203;</span><span class="k">생성</span></div><div style="position:absolute;left:0px;top:1034px;width:240px;height:1px;background:#2e2e2e"></div><div class="t" style="left:83px;top:1042.0px;color:#8f8f8f;font-size:11px;font-weight:400;line-height:20px;letter-spacing:-0.01px;">v1.0.soo.test | #8a0a78cd</div><div class="t" style="left:83px;top:1060.0px;color:#8f8f8f;font-size:11px;font-weight:400;line-height:20px;letter-spacing:-0.13px;">2026-03-16 17:41:08</div><svg style="position:absolute;left:206px;top:1052px;" width="18" height="18" viewBox="0 0 24 24"><path fill="#bdbdbd" d="M15.41,16.58L10.83,12L15.41,7.41L14,6L8,12L14,18L15.41,16.58Z"/></svg><svg class="abs" style="left:0;top:1034px" width="100" height="46" viewBox="0 0 100 46"><g transform="translate(20.08 14.44) scale(0.369)"><g transform="translate(20 10) scale(0.037037)" fill="#909090">
<path d="M454 203 A141 141 0 0 1 702 203 L1003 765 A118 118 0 0 1 795 878 L565 492 A72 72 0 0 0 418 560 L528 775 Q566 850 524 902 Q492 944 440 944 L185 944 Q78 944 118 838 Z"/>
<circle cx="1062" cy="268" r="135"/>
<path d="M1215 540 L1390 830" stroke="#909090" stroke-width="232" stroke-linecap="round" fill="none"/>
</g><g transform="translate(16 4) scale(0.083333)" fill="none" stroke="#909090" stroke-width="33" stroke-linejoin="miter" stroke-linecap="butt">
<path d="M866 300 L952 150 L990 150 L1076 300 M905 262 L1038 262" stroke-linejoin="round"/>
<path d="M1135 135 L1135 300"/>
<path d="M1205 300 L1205 150 L1235 150 L1350 285 L1375 285 L1375 135" stroke-linejoin="round"/>
<path d="M1445 300 L1445 150 L1540 150 Q1577 150 1577 187 L1577 198 Q1577 235 1540 235 L1445 235"/>
</g>
<g transform="translate(16 4) scale(0.083333)" fill="none" stroke="#909090" stroke-width="27" stroke-linejoin="miter">
<path d="M1000 378 L895 378 Q863 378 863 410 L863 440 Q863 472 895 472 L1000 472"/>
<path d="M1065 378 L1135 378 Q1167 378 1167 410 L1167 440 Q1167 472 1135 472 L1065 472 Q1033 472 1033 440 L1033 410 Q1033 378 1065 378 Z"/>
<path d="M1213 485 L1213 378 L1280 378 Q1312 378 1312 408 L1312 412 Q1312 442 1280 442 L1213 442"/>
</g></g></svg><div style="position:absolute;left:0px;top:0px;width:1920px;height:64px;background:#1a1a1a;box-shadow:0 2px 4px -1px rgba(0,0,0,.2),0 4px 5px 0 rgba(0,0,0,.14),0 1px 10px 0 rgba(0,0,0,.12)"></div><svg class="abs" style="left:0;top:0" width="176" height="64" viewBox="0 0 176 64"><g transform="translate(20 10) scale(0.037037)" fill="#e60012">
<path d="M454 203 A141 141 0 0 1 702 203 L1003 765 A118 118 0 0 1 795 878 L565 492 A72 72 0 0 0 418 560 L528 775 Q566 850 524 902 Q492 944 440 944 L185 944 Q78 944 118 838 Z"/>
<circle cx="1062" cy="268" r="135"/>
<path d="M1215 540 L1390 830" stroke="#e60012" stroke-width="232" stroke-linecap="round" fill="none"/>
</g><g transform="translate(16 4) scale(0.083333)" fill="none" stroke="#fff" stroke-width="33" stroke-linejoin="miter" stroke-linecap="butt">
<path d="M866 300 L952 150 L990 150 L1076 300 M905 262 L1038 262" stroke-linejoin="round"/>
<path d="M1135 135 L1135 300"/>
<path d="M1205 300 L1205 150 L1235 150 L1350 285 L1375 285 L1375 135" stroke-linejoin="round"/>
<path d="M1445 300 L1445 150 L1540 150 Q1577 150 1577 187 L1577 198 Q1577 235 1540 235 L1445 235"/>
</g>
<g transform="translate(16 4) scale(0.083333)" fill="none" stroke="#fff" stroke-width="27" stroke-linejoin="miter">
<path d="M1000 378 L895 378 Q863 378 863 410 L863 440 Q863 472 895 472 L1000 472"/>
<path d="M1065 378 L1135 378 Q1167 378 1167 410 L1167 440 Q1167 472 1135 472 L1065 472 Q1033 472 1033 440 L1033 410 Q1033 378 1065 378 Z"/>
<path d="M1213 485 L1213 378 L1280 378 Q1312 378 1312 408 L1312 412 Q1312 442 1280 442 L1213 442"/>
</g></svg><div style="position:absolute;left:673px;top:14px;width:500px;height:36px;background:#f3f3f3;border-radius:5px"></div><svg style="position:absolute;left:686px;top:22.5px;" width="19" height="19" viewBox="0 0 24 24"><path fill="#707070" d="M9.5,3A6.5,6.5 0 0,1 16,9.5C16,11.11 15.41,12.59 14.44,13.73L14.71,14H15.5L20.5,19L19,20.5L14,15.5V14.71L13.73,14.44C12.59,15.41 11.11,16 9.5,16A6.5,6.5 0 0,1 3,9.5A6.5,6.5 0 0,1 9.5,3M9.5,5C7,5 5,7 5,9.5C5,12 7,14 9.5,14C12,14 14,12 14,9.5C14,7 12,5 9.5,5Z"/></svg><div class="t" style="left:714px;top:23.5px;color:#9a9a9a;font-size:14.5px;font-weight:400;line-height:20px;letter-spacing:-1.20px;"><span class="z">&#8203;</span><span class="k">검색</span></div><div class="t" style="left:955px;top:23.5px;color:#4a4a4a;font-size:13.8px;font-weight:400;line-height:20px;letter-spacing:-0.26px;"><span class="z">&#8203;</span><span class="k">검색하려면</span></div><div style="position:absolute;left:1018.5px;top:20.5px;width:33px;height:23px;border:1px solid #dedede;border-radius:5px;background:#f5f5f5"></div><div class="t mono" style="left:1023.5px;top:23.5px;color:#6a6a6a;font-size:11.8px;font-weight:400;line-height:20px;letter-spacing:-0.96px;">Ctrl</div><div class="t" style="left:1055.5px;top:23.5px;color:#4a4a4a;font-size:14px;font-weight:400;line-height:20px;">+</div><div style="position:absolute;left:1067.5px;top:20.5px;width:23px;height:23px;border:1px solid #dedede;border-radius:5px;background:#f5f5f5"></div><div class="t mono" style="left:1075.5px;top:23.5px;color:#6a6a6a;font-size:12px;font-weight:400;line-height:20px;">/</div><div class="t" style="left:1095px;top:23.5px;color:#4a4a4a;font-size:13.8px;font-weight:400;line-height:20px;letter-spacing:-0.06px;"><span class="z">&#8203;</span><span class="k">를</span> <span class="k">누르세요</span></div><svg style="position:absolute;left:1706px;top:20px;" width="24" height="24" viewBox="0 0 24 24"><path fill="#ececec" d="M3,6H21V8H3V6M3,11H21V13H3V11M3,16H21V18H3V16Z"/></svg><svg style="position:absolute;left:1746px;top:20px;" width="24" height="24" viewBox="0 0 24 24"><path fill="#ececec" d="M17.75,4.09L15.22,6.03L16.13,9.09L13.5,7.28L10.87,9.09L11.78,6.03L9.25,4.09L12.44,4L13.5,1L14.56,4L17.75,4.09M21.25,11L19.61,12.25L20.2,14.23L18.5,13.06L16.8,14.23L17.39,12.25L15.75,11L17.81,10.95L18.5,9L19.19,10.95L21.25,11M18.97,15.95C19.8,15.87 20.69,17.05 20.16,17.8C19.84,18.25 19.5,18.67 19.08,19.07C15.17,23 8.84,23 4.94,19.07C1.03,15.17 1.03,8.83 4.94,4.93C5.34,4.53 5.76,4.17 6.21,3.85C6.96,3.32 8.14,4.21 8.06,5.04C7.79,7.9 8.75,10.87 10.95,13.06C13.14,15.26 16.1,16.22 18.97,15.95M17.33,17.97C14.5,17.81 11.7,16.64 9.53,14.5C7.36,12.31 6.2,9.5 6.04,6.68C3.23,9.82 3.34,14.64 6.35,17.66C9.37,20.67 14.19,20.78 17.33,17.97Z"/></svg><svg style="position:absolute;left:1786px;top:20px;" width="24" height="24" viewBox="0 0 24 24"><path fill="#ececec" d="M5,5H10V7H7V10H5V5M14,5H19V10H17V7H14V5M17,14H19V19H14V17H17V14M10,17V19H5V14H7V17H10Z"/></svg><svg style="position:absolute;left:1823px;top:20px;" width="24" height="24" viewBox="0 0 24 24"><path fill="#ececec" d="M12,15.5A3.5,3.5 0 0,1 8.5,12A3.5,3.5 0 0,1 12,8.5A3.5,3.5 0 0,1 15.5,12A3.5,3.5 0 0,1 12,15.5M19.43,12.97C19.47,12.65 19.5,12.33 19.5,12C19.5,11.67 19.47,11.34 19.43,11L21.54,9.37C21.73,9.22 21.78,8.95 21.66,8.73L19.66,5.27C19.54,5.05 19.27,4.96 19.05,5.05L16.56,6.05C16.04,5.66 15.5,5.32 14.87,5.07L14.5,2.42C14.46,2.18 14.25,2 14,2H10C9.75,2 9.54,2.18 9.5,2.42L9.13,5.07C8.5,5.32 7.96,5.66 7.44,6.05L4.95,5.05C4.73,4.96 4.46,5.05 4.34,5.27L2.34,8.73C2.21,8.95 2.27,9.22 2.46,9.37L4.57,11C4.53,11.34 4.5,11.67 4.5,12C4.5,12.33 4.53,12.65 4.57,12.97L2.46,14.63C2.27,14.78 2.21,15.05 2.34,15.27L4.34,18.73C4.46,18.95 4.73,19.03 4.95,18.95L7.44,17.94C7.96,18.34 8.5,18.68 9.13,18.93L9.5,21.58C9.54,21.82 9.75,22 10,22H14C14.25,22 14.46,21.82 14.5,21.58L14.87,18.93C15.5,18.67 16.04,18.34 16.56,17.94L19.05,18.95C19.27,19.03 19.54,18.95 19.66,18.73L21.66,15.27C21.78,15.05 21.73,14.78 21.54,14.63L19.43,12.97Z"/></svg><svg style="position:absolute;left:1864px;top:20px;" width="24" height="24" viewBox="0 0 24 24"><path fill="#ececec" d="M12,4A4,4 0 0,1 16,8A4,4 0 0,1 12,12A4,4 0 0,1 8,8A4,4 0 0,1 12,4M12,14C16.42,14 20,15.79 20,18V20H4V18C4,15.79 7.58,14 12,14Z"/></svg></body></html>
